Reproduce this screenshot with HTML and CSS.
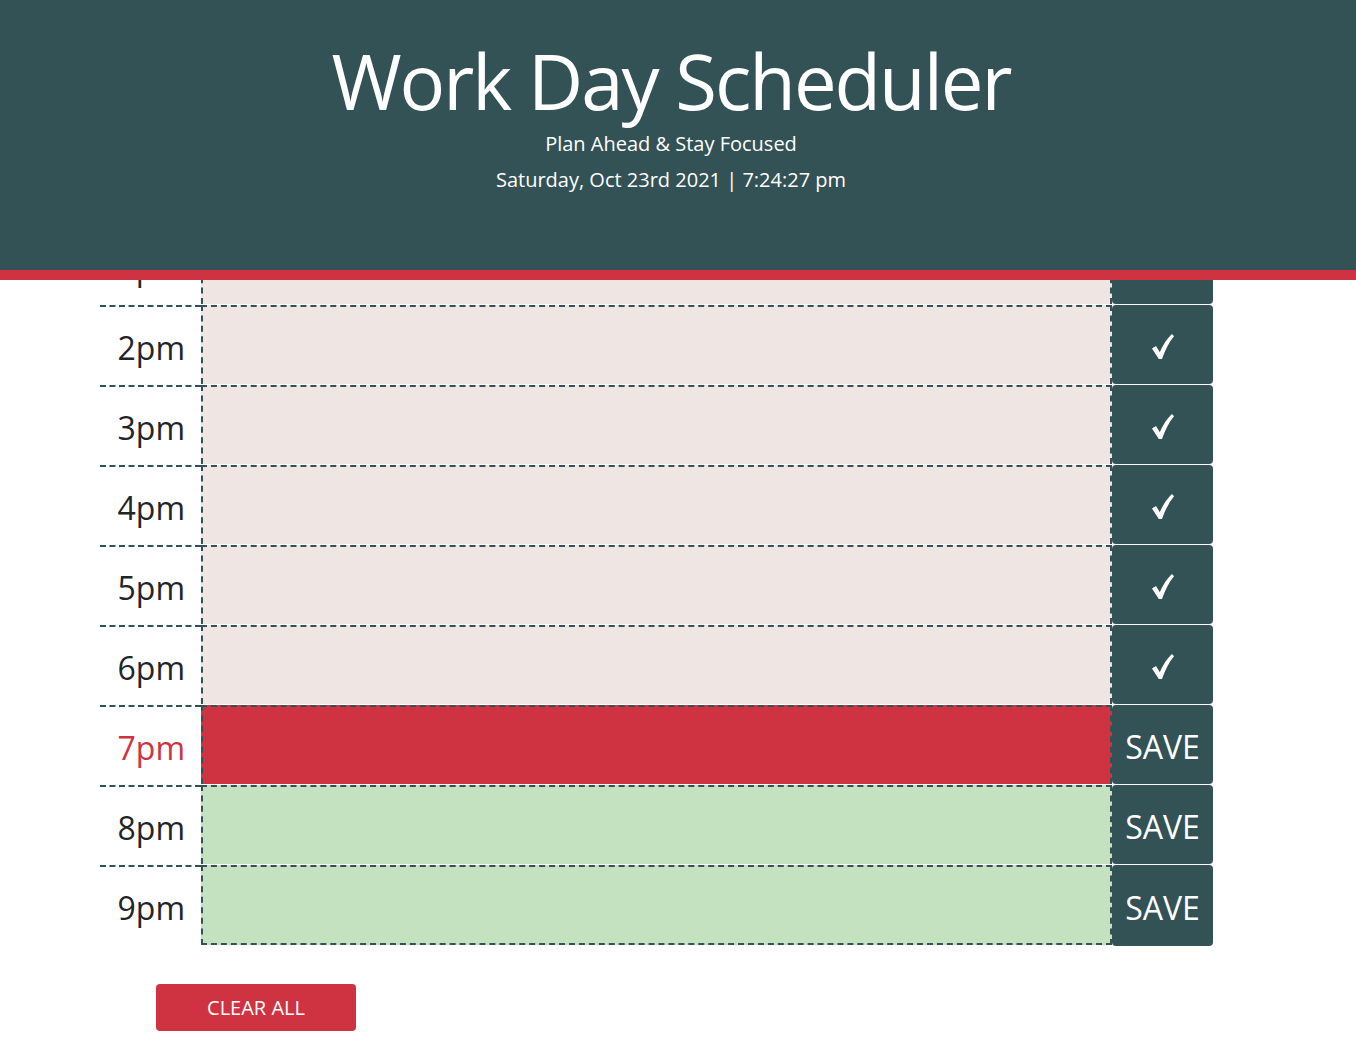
FILE: index.html
```html
<!DOCTYPE html>
<html lang="en">
<head>
<meta charset="utf-8">
<title>Work Day Scheduler</title>
<link rel="stylesheet" href="styles.css">
</head>
<body>
<header class="jumbotron">
  <h1 class="title">Work Day Scheduler</h1>
  <p class="lead">Plan Ahead &amp; Stay Focused</p>
  <p class="lead">Saturday, Oct 23rd 2021 | 7:24:27 pm</p>
</header>
<main class="viewport">
  <div class="scheduler">
    <div class="rows">
      <div class="time-block"><div class="hour">9am</div><textarea class="description past"></textarea><button class="saveBtn"><svg class="check" viewBox="0 0 22 25"><path d="M0 14.5 L4 12 L7.8 18.2 Q12.5 7 20 0 L22 2.2 Q15 10.5 10 25 L6.8 25 Z"/></svg></button></div>
      <div class="time-block"><div class="hour">10am</div><textarea class="description past"></textarea><button class="saveBtn"><svg class="check" viewBox="0 0 22 25"><path d="M0 14.5 L4 12 L7.8 18.2 Q12.5 7 20 0 L22 2.2 Q15 10.5 10 25 L6.8 25 Z"/></svg></button></div>
      <div class="time-block"><div class="hour">11am</div><textarea class="description past"></textarea><button class="saveBtn"><svg class="check" viewBox="0 0 22 25"><path d="M0 14.5 L4 12 L7.8 18.2 Q12.5 7 20 0 L22 2.2 Q15 10.5 10 25 L6.8 25 Z"/></svg></button></div>
      <div class="time-block"><div class="hour">12pm</div><textarea class="description past"></textarea><button class="saveBtn"><svg class="check" viewBox="0 0 22 25"><path d="M0 14.5 L4 12 L7.8 18.2 Q12.5 7 20 0 L22 2.2 Q15 10.5 10 25 L6.8 25 Z"/></svg></button></div>
      <div class="time-block"><div class="hour">1pm</div><textarea class="description past"></textarea><button class="saveBtn"><svg class="check" viewBox="0 0 22 25"><path d="M0 14.5 L4 12 L7.8 18.2 Q12.5 7 20 0 L22 2.2 Q15 10.5 10 25 L6.8 25 Z"/></svg></button></div>
      <div class="time-block"><div class="hour">2pm</div><textarea class="description past"></textarea><button class="saveBtn"><svg class="check" viewBox="0 0 22 25"><path d="M0 14.5 L4 12 L7.8 18.2 Q12.5 7 20 0 L22 2.2 Q15 10.5 10 25 L6.8 25 Z"/></svg></button></div>
      <div class="time-block"><div class="hour">3pm</div><textarea class="description past"></textarea><button class="saveBtn"><svg class="check" viewBox="0 0 22 25"><path d="M0 14.5 L4 12 L7.8 18.2 Q12.5 7 20 0 L22 2.2 Q15 10.5 10 25 L6.8 25 Z"/></svg></button></div>
      <div class="time-block"><div class="hour">4pm</div><textarea class="description past"></textarea><button class="saveBtn"><svg class="check" viewBox="0 0 22 25"><path d="M0 14.5 L4 12 L7.8 18.2 Q12.5 7 20 0 L22 2.2 Q15 10.5 10 25 L6.8 25 Z"/></svg></button></div>
      <div class="time-block"><div class="hour">5pm</div><textarea class="description past"></textarea><button class="saveBtn"><svg class="check" viewBox="0 0 22 25"><path d="M0 14.5 L4 12 L7.8 18.2 Q12.5 7 20 0 L22 2.2 Q15 10.5 10 25 L6.8 25 Z"/></svg></button></div>
      <div class="time-block"><div class="hour">6pm</div><textarea class="description past"></textarea><button class="saveBtn"><svg class="check" viewBox="0 0 22 25"><path d="M0 14.5 L4 12 L7.8 18.2 Q12.5 7 20 0 L22 2.2 Q15 10.5 10 25 L6.8 25 Z"/></svg></button></div>
      <div class="time-block"><div class="hour now">7pm</div><textarea class="description present"></textarea><button class="saveBtn">SAVE</button></div>
      <div class="time-block"><div class="hour">8pm</div><textarea class="description future"></textarea><button class="saveBtn">SAVE</button></div>
      <div class="time-block last"><div class="hour">9pm</div><textarea class="description future"></textarea><button class="saveBtn">SAVE</button></div>
    </div>
    <button class="clear-btn">CLEAR ALL</button>
  </div>
</main>
</body>
</html>
```

FILE: styles.css
```css
* { box-sizing: border-box; }

html, body {
  margin: 0;
  padding: 0;
  height: 100%;
  overflow: hidden;
  background: #ffffff;
  font-family: "Open Sans", "Noto Sans", sans-serif;
  color: #212529;
}

.jumbotron {
  position: fixed;
  top: 0;
  left: 0;
  right: 0;
  z-index: 10;
  height: 280px;
  margin: 0;
  padding: 36px 14px 0 0;
  background: #335256;
  border-bottom: 10px solid #cf3341;
  color: #ffffff;
  text-align: center;
}

.title {
  margin: 0;
  font-size: 76px;
  font-weight: 400;
  line-height: 90px;
  letter-spacing: -2px;
}

.lead {
  margin: 0;
  font-size: 20px;
  font-weight: 400;
  line-height: 36px;
}

.viewport {
  height: 100vh;
  overflow: hidden;
  display: flex;
  flex-direction: column;
  justify-content: flex-end;
}

.scheduler {
  flex-shrink: 0;
  padding: 0 0 26px 100px;
  display: flex;
  flex-direction: column;
  align-items: flex-start;
}

.rows {
  display: flex;
  flex-direction: column;
}

.time-block {
  display: flex;
  height: 80px;
}

.hour {
  width: 101px;
  height: 80px;
  border-top: 2px dashed #335256;
  padding: 4px 16px 0 0;
  text-align: right;
  font-size: 32px;
  line-height: 74px;
  color: #212529;
}

.hour.now { color: #cf3341; }

.description {
  width: 911px;
  height: 79px;
  margin: 0 0 1px 0;
  padding: 8px;
  border: 2px dashed #335256;
  border-bottom: none;
  border-radius: 0;
  resize: none;
  font-family: inherit;
  outline: none;
}

.last .description {
  height: 80px;
  margin-bottom: 0;
  border-bottom: 2px dashed #335256;
}

.past { background: #efe6e4; }
.present { background: #cf3341; }
.future { background: #c4e2c0; }

.saveBtn {
  width: 101px;
  height: 79px;
  margin: 0 0 1px 0;
  padding: 5px 0 0 0;
  border: none;
  border-radius: 4px;
  background: #335256;
  color: #ffffff;
  font-family: "Open Sans", "Noto Sans", sans-serif;
  font-size: 32px;
  line-height: 74px;
  display: flex;
  align-items: center;
  justify-content: center;
}

.last .saveBtn {
  height: 81px;
  margin-bottom: 0;
}

.check {
  width: 22px;
  height: 25px;
  fill: #ffffff;
  margin-top: -2px;
}

.clear-btn {
  margin: 39px 0 0 56px;
  width: 200px;
  height: 47px;
  border: none;
  border-radius: 4px;
  background: #cf3341;
  color: #ffffff;
  font-family: "Open Sans", "Noto Sans", sans-serif;
  font-size: 20px;
  line-height: 47px;
  padding: 0;
}
```
